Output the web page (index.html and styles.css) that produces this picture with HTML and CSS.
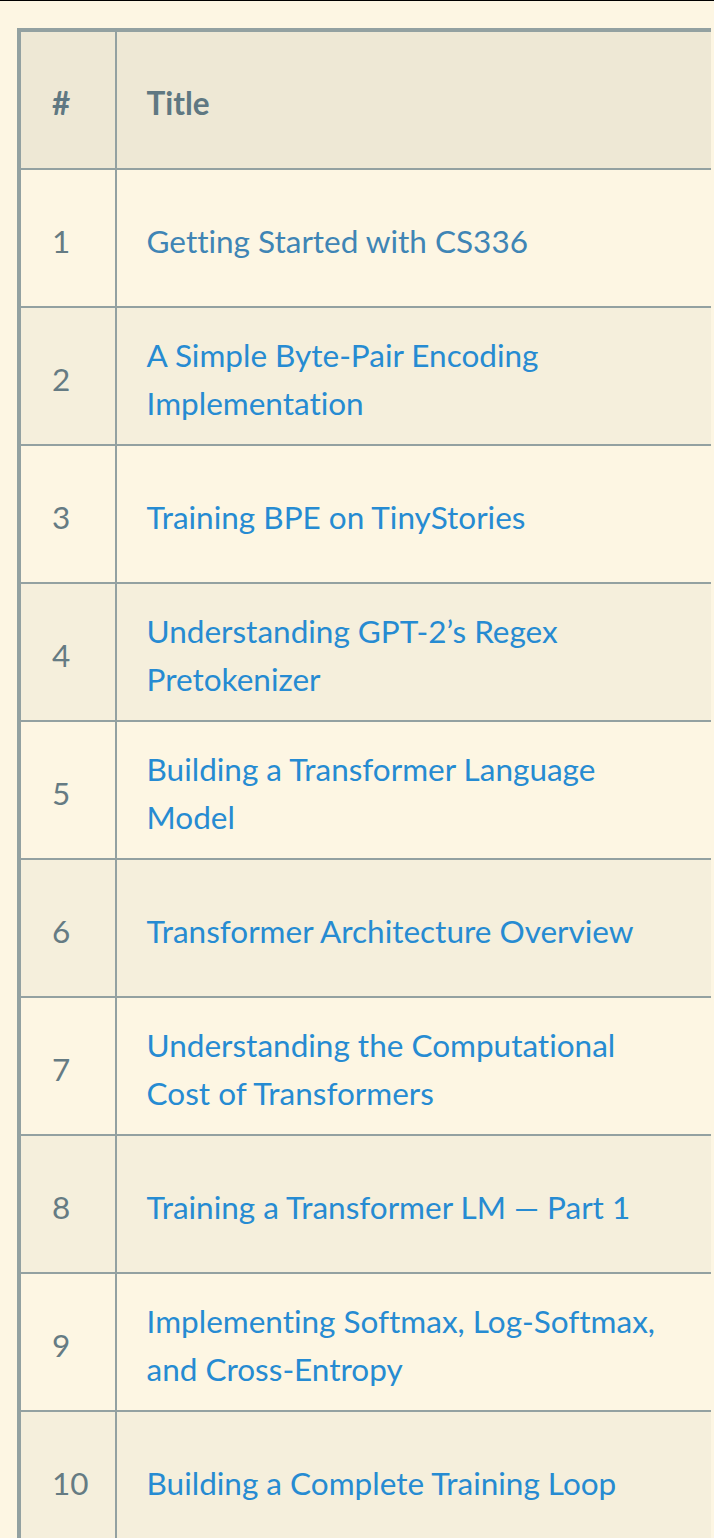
FILE: index.html
```html
<!DOCTYPE html>
<html>
<head>
<meta charset="utf-8">
<link rel="stylesheet" href="styles.css">
</head>
<body>
<div class="page">
  <div class="table-wrap">
    <table class="posts">
      <thead>
        <tr><th class="num"><div class="cell">#</div></th><th class="title"><div class="cell">Title</div></th></tr>
      </thead>
      <tbody>
        <tr><td class="num"><div class="cell">1</div></td><td class="title"><div class="cell"><a class="visited" href="#">Getting Started with CS336</a></div></td></tr>
        <tr><td class="num"><div class="cell">2</div></td><td class="title"><div class="cell"><a href="#">A Simple Byte-Pair Encoding Implementation</a></div></td></tr>
        <tr><td class="num"><div class="cell">3</div></td><td class="title"><div class="cell"><a href="#">Training BPE on TinyStories</a></div></td></tr>
        <tr><td class="num"><div class="cell">4</div></td><td class="title"><div class="cell"><a href="#">Understanding GPT-2’s Regex Pretokenizer</a></div></td></tr>
        <tr><td class="num"><div class="cell">5</div></td><td class="title"><div class="cell"><a href="#">Building a Transformer Language Model</a></div></td></tr>
        <tr><td class="num"><div class="cell">6</div></td><td class="title"><div class="cell"><a href="#">Transformer Architecture Overview</a></div></td></tr>
        <tr><td class="num"><div class="cell">7</div></td><td class="title"><div class="cell"><a href="#">Understanding the Computational Cost of Transformers</a></div></td></tr>
        <tr><td class="num"><div class="cell">8</div></td><td class="title"><div class="cell"><a href="#">Training a Transformer LM — Part 1</a></div></td></tr>
        <tr><td class="num"><div class="cell">9</div></td><td class="title"><div class="cell"><a href="#">Implementing Softmax, Log-Softmax, and Cross-Entropy</a></div></td></tr>
        <tr><td class="num"><div class="cell">10</div></td><td class="title"><div class="cell"><a href="#">Building a Complete Training Loop</a></div></td></tr>
      </tbody>
    </table>
  </div>
</div>
</body>
</html>
```
FILE: styles.css
```css
html, body {
  margin: 0;
  padding: 0;
  background: #fdf6e3;
}
body {
  border-top: 1px solid #000;
  font-family: "Lato", "Open Sans", sans-serif;
  font-variant-ligatures: none;
  font-size: 31.5px;
  line-height: 48px;
  color: #657b83;
}
.page {
  padding: 27px 3px 0 17px;
}
.table-wrap {
  overflow: hidden;
}
.posts {
  border-collapse: collapse;
  width: 100%;
  border-top: 4px solid #93a1a1;
  border-left: 4px solid #93a1a1;
}
.posts th, .posts td {
  padding: 0 30px;
  border-bottom: 2px solid #93a1a1;
  text-align: left;
  vertical-align: middle;
}
.posts .title {
  border-left: 2px solid #93a1a1;
  padding-left: 30px;
}
.posts .num {
  width: 36px;
  padding-left: 31px;
  padding-right: 26px;
}
.cell {
  box-sizing: border-box;
  height: 136px;
  padding-top: 5px;
  display: flex;
  align-items: center;
}
.posts thead th {
  background: #eee8d5;
  font-weight: bold;
  color: #5f7882;
}
.posts tbody tr:nth-child(odd) td {
  background: #fdf6e3;
}
.posts tbody tr:nth-child(even) td {
  background: #f5efdc;
}
.posts a {
  color: #268bd2;
  text-decoration: none;
}
.posts a.visited {
  color: #3f85b5;
}
```
